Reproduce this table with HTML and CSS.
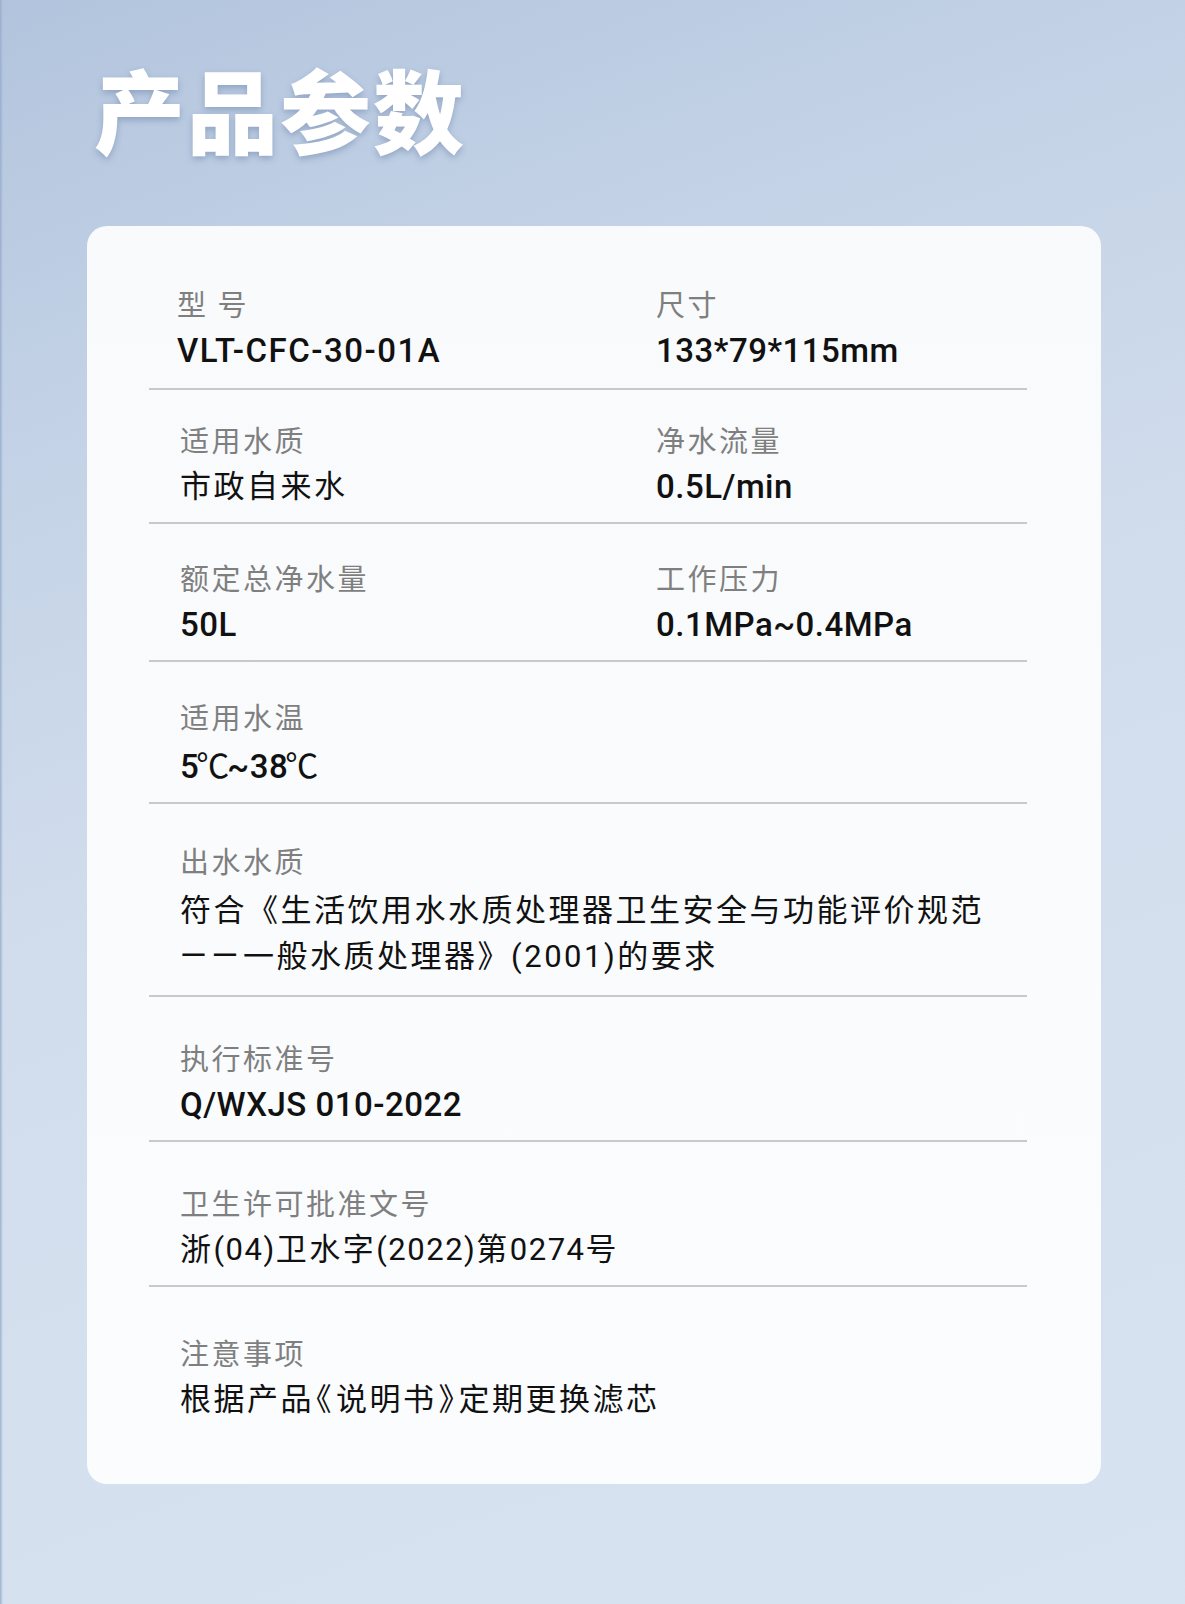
FILE: index.html
```html
<!DOCTYPE html>
<html lang="zh-CN">
<head>
<meta charset="utf-8">
<title>产品参数</title>
<link rel="stylesheet" href="styles.css">
</head>
<body>
<div class="page">
  <h1 class="title">产品参数</h1>
  <section class="card">
    <div class="spec-row">
      <div class="cell">
        <div class="label">型 号</div>
        <div class="value latin wide-track">VLT-CFC-30-01A</div>
      </div>
      <div class="cell">
        <div class="label">尺寸</div>
        <div class="value latin">133*79*115mm</div>
      </div>
    </div>
    <div class="spec-row">
      <div class="cell">
        <div class="label">适用水质</div>
        <div class="value">市政自来水</div>
      </div>
      <div class="cell">
        <div class="label">净水流量</div>
        <div class="value latin">0.5L/min</div>
      </div>
    </div>
    <div class="spec-row">
      <div class="cell">
        <div class="label">额定总净水量</div>
        <div class="value latin">50L</div>
      </div>
      <div class="cell">
        <div class="label">工作压力</div>
        <div class="value latin">0.1MPa~0.4MPa</div>
      </div>
    </div>
    <div class="spec-row">
      <div class="cell">
        <div class="label">适用水温</div>
        <div class="value latin">5<span class="deg">℃</span>~38<span class="deg">℃</span></div>
      </div>
    </div>
    <div class="spec-row">
      <div class="cell wide">
        <div class="label">出水水质</div>
        <div class="value multi">符合《生活饮用水水质处理器卫生安全与功能评价规范<br><span class="dash">——</span>一般水质处理器》(2001)的要求</div>
      </div>
    </div>
    <div class="spec-row">
      <div class="cell">
        <div class="label">执行标准号</div>
        <div class="value latin">Q/WXJS 010-2022</div>
      </div>
    </div>
    <div class="spec-row">
      <div class="cell wide">
        <div class="label">卫生许可批准文号</div>
        <div class="value">浙<span class="num">(04)</span>卫水字<span class="num">(2022)</span>第<span class="num">0274</span>号</div>
      </div>
    </div>
    <div class="spec-row">
      <div class="cell wide">
        <div class="label">注意事项</div>
        <div class="value">根据产品<span class="halt">《</span>说明书<span class="halt">》</span>定期更换滤芯</div>
      </div>
    </div>
  </section>
</div>
</body>
</html>
```

FILE: styles.css
```css
* {
  box-sizing: border-box;
}

html, body {
  margin: 0;
  padding: 0;
}

body {
  width: 1185px;
  height: 1604px;
  overflow: hidden;
  font-family: "Noto Sans CJK SC", sans-serif;
}

.page {
  width: 1185px;
  height: 1604px;
  padding: 61px 0 0 0;
  background:
    linear-gradient(90deg, rgba(150, 172, 204, 0.9) 0, rgba(150, 172, 204, 0) 3px),
    linear-gradient(160deg, #b2c4dd 0%, #c3d2e6 22%, #d0dcec 45%, #d5e0ef 70%, #d8e3f1 100%);
}

.title {
  margin: 0 0 73px 94px;
  font-family: "Noto Sans CJK SC", sans-serif;
  font-size: 91px;
  line-height: 92px;
  font-weight: 900;
  letter-spacing: 2px;
  color: #ffffff;
  text-shadow: 0 3px 6px rgba(70, 95, 140, 0.35);
}

.card {
  margin-left: 87px;
  width: 1014px;
  height: 1258px;
  padding: 24px 74px 0 62px;
  border-radius: 20px;
  background: linear-gradient(180deg, #f8fafc 0%, #fbfcfe 100%);
}

.spec-row {
  display: grid;
  grid-template-columns: 476px 1fr;
  padding: 31px 0 15px 31px;
  border-bottom: 2px solid #c9c9cb;
}

/* vertical rhythm of the rows grows slightly down the card */
.spec-row:nth-child(1) { padding-top: 35px; padding-bottom: 17px; }
.spec-row:nth-child(3) { padding-top: 35px; }
.spec-row:nth-child(4) { padding-top: 36px; }
.spec-row:nth-child(5) { padding-top: 38px; }
.spec-row:nth-child(6),
.spec-row:nth-child(7) { padding-top: 42px; }
.spec-row:last-child {
  padding-top: 47px;
  border-bottom: none;
}

.spec-row:first-child .cell:first-child {
  margin-left: -3px;
}

.cell.wide {
  grid-column: 1 / -1;
}

.label {
  font-size: 29px;
  line-height: 36px;
  letter-spacing: 2.5px;
  color: #7f7f80;
}

.value {
  margin-top: 10px;
  font-family: "Roboto", "Noto Sans CJK SC", sans-serif;
  font-size: 31px;
  line-height: 40px;
  letter-spacing: 2.5px;
  color: #111111;
}

.value.latin {
  font-size: 33px;
  font-weight: 500;
  letter-spacing: 0.5px;
}

.value.latin.wide-track {
  letter-spacing: 1.5px;
}

.value.multi {
  line-height: 46px;
}

.deg {
  font-family: "Noto Sans CJK SC", sans-serif;
  font-weight: 400;
  margin-left: -3px;
  letter-spacing: -2px;
}

.dash {
  font-size: 34px;
  line-height: 1;
  letter-spacing: 5px;
}

.num {
  letter-spacing: 1.5px;
}

.halt {
  font-feature-settings: "halt" 1;
  padding-left: 2px;
  letter-spacing: 4.5px;
}
```
